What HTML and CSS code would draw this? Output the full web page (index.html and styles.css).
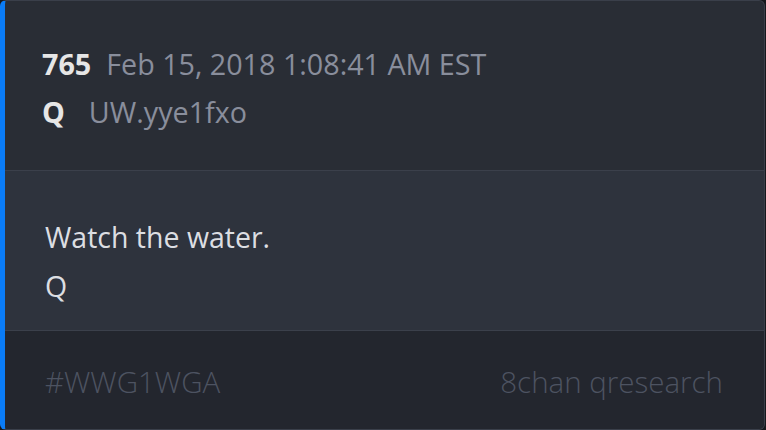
FILE: index.html
```html
<!DOCTYPE html>
<html>
<head>
<meta charset="utf-8">
<link rel="stylesheet" href="styles.css">
</head>
<body>
<div class="card">
  <div class="head">
    <div class="row"><span class="num">765</span><span class="meta">Feb 15, 2018 1:08:41 AM EST</span></div>
    <div class="row"><span class="num q">Q</span><span class="meta">UW.yye1fxo</span></div>
  </div>
  <div class="body">
    <p class="line">Watch the water.</p>
    <p class="line">Q</p>
  </div>
  <div class="foot">
    <span class="tag">#WWG1WGA</span>
    <span class="tag">8chan qresearch</span>
  </div>
</div>
</body>
</html>
```
FILE: styles.css
```css
html, body { margin: 0; padding: 0; background: #16181c; }
body { font-family: "Open Sans", "Noto Sans", sans-serif; width: 766px; height: 430px; }
.card {
  width: 759px;
  height: 428px;
  border: 1px solid #3a3f4a;
  border-left: 5px solid #0a7cf7;
  border-radius: 6px;
  overflow: hidden;
  display: flex;
  flex-direction: column;
  background: #292d35;
}
.head { height: 170px; flex: none; box-sizing: border-box; padding: 39px 36px 0 37px; border-bottom: 1px solid #3b404b; }
.row { display: flex; align-items: baseline; line-height: 48px; font-size: 28.7px; }
.num { font-weight: 700; color: #e6e6e6; margin-right: 15px; }
.q { margin-right: 24px; }
.meta { color: #898e9c; }
.body { height: 160px; flex: none; box-sizing: border-box; background: #2e333d; padding: 42px 40px 0 40px; border-bottom: 1px solid #3b404b; }
.line { margin: 0; font-size: 28.5px; line-height: 49px; color: #dcdee2; }
.foot { flex: 1; background: #23262e; display: flex; justify-content: space-between; align-items: center; padding: 2px 41px 0 40px; }
.tag { font-size: 29.5px; font-weight: 300; color: #4d5361; }
```
